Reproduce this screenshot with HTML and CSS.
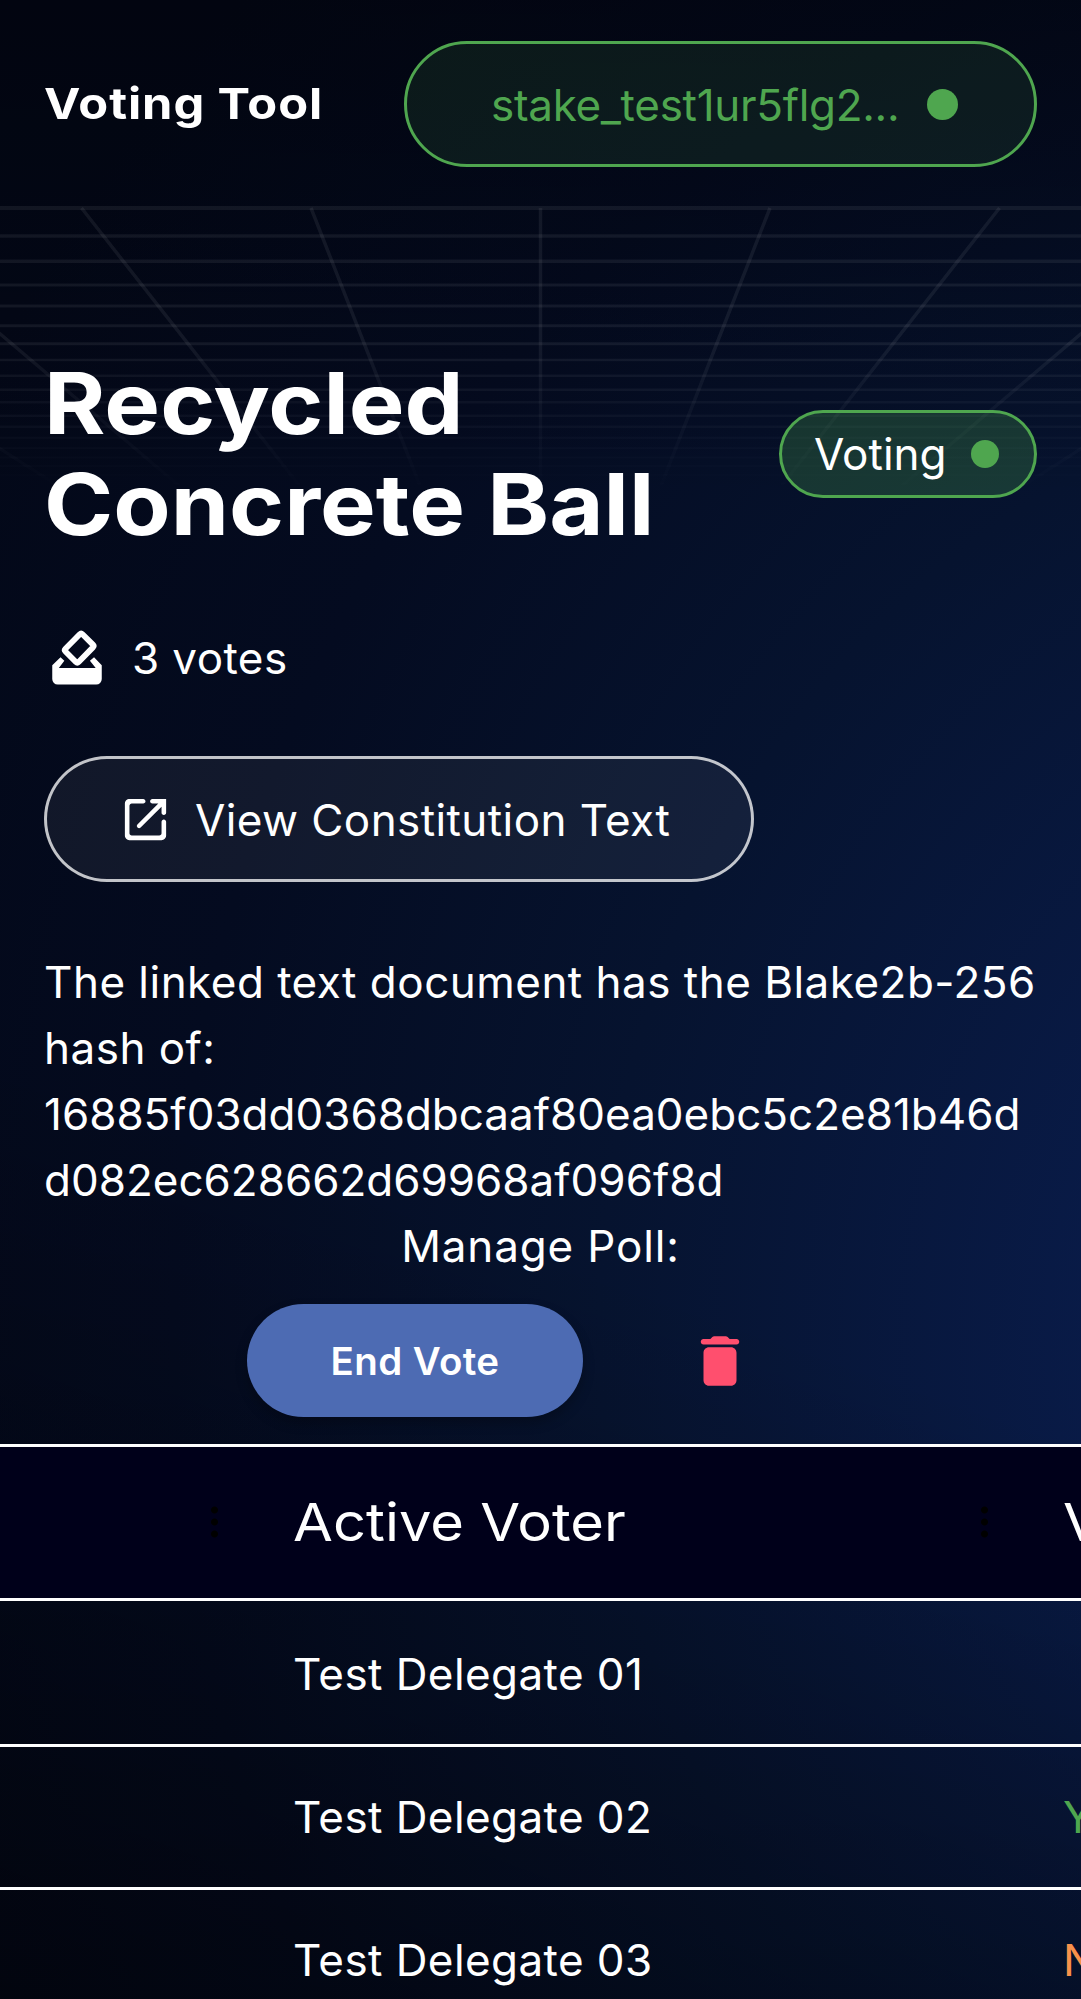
FILE: index.html
```
<!DOCTYPE html>
<html lang="en">
<head>
<meta charset="utf-8">
<title>Voting Tool</title>
<link rel="stylesheet" href="styles.css">
</head>
<body>
<svg class="grid" viewBox="0 0 1081 300" aria-hidden="true">
  <g class="grid-rows">
    <path stroke-width="4" d="M0 2H1081"/>
    <path stroke-width="3.4" d="M0 30H1081M0 55.3H1081"/>
    <path stroke-width="3" d="M0 79H1081M0 100H1081M0 119.7H1081M0 137.7H1081"/>
    <path stroke-width="2.5" d="M0 154H1081M0 169.7H1081M0 183.7H1081M0 196.3H1081M0 209.7H1081M0 220.7H1081"/>
    <path stroke-width="2" d="M0 231.7H1081M0 242.3H1081M0 251.5H1081M0 260H1081M0 269H1081M0 277.6H1081M0 286H1081"/>
  </g>
  <path class="grid-cols" d="M540.5 2V290M311 2L424 290M81.5 2L307.5 290M-148 2L191 290M-377.5 2L74 290M770 2L657 290M999.5 2L773.5 290M1229 2L890 290M1458.5 2L1007 290"/>
</svg>
<header class="topbar">
  <div class="brand">Voting Tool</div>
  <button class="wallet"><span class="wallet-id">stake_test1ur5flg2...</span><i class="dot dot-lg"></i></button>
</header>
<main class="poll">
  <section class="heading">
    <h1>Recycled<br>Concrete Ball</h1>
    <div class="status"><span>Voting</span><i class="dot"></i></div>
  </section>
  <div class="votes">
    <svg class="icon" viewBox="0 0 24 24"><path d="M6 12.1l1.4 1.3L5.4 16h13.4l-2.1-2.6 1.5-1.3L21 15v5a2 2 0 0 1-2 2H5a2 2 0 0 1-2-2v-5z"/><path fill="none" stroke="currentColor" stroke-width="2.1" stroke-linejoin="round" d="M13 3.7q.5-.5 1 0l3.8 3.8q.5.5 0 1l-5.2 5.3q-.5.5-1 0l-3.8-3.8q-.5-.5 0-1z"/></svg>
    <span>3 votes</span>
  </div>
  <a class="doc-link">
    <svg class="link-icon" viewBox="0 0 24 24"><path d="M18 19H6c-.55 0-1-.45-1-1V6c0-.55.45-1 1-1h5c.55 0 1-.45 1-1s-.45-1-1-1H5c-1.11 0-2 .9-2 2v14c0 1.1.9 2 2 2h14c1.1 0 2-.9 2-2v-6c0-.55-.45-1-1-1s-1 .45-1 1v5c0 .55-.45 1-1 1zM14 4c0 .55.45 1 1 1h2.59l-9.13 9.13a1 1 0 0 0 1.41 1.41L19 6.41V9c0 .55.45 1 1 1s1-.45 1-1V3h-6c-.55 0-1 .45-1 1z"/></svg>
    <span>View Constitution Text</span>
  </a>
  <p class="hash">The linked text document has the Blake2b-256 hash of: <span class="digest">16885f03dd0368dbcaaf80ea0ebc5c2e81b46dd082ec628662d69968af096f8d</span></p>
  <p class="manage">Manage Poll:</p>
  <div class="actions">
    <button class="end">End Vote</button>
    <svg class="trash" viewBox="0 0 24 24"><path d="M6 19c0 1.1.9 2 2 2h8c1.1 0 2-.9 2-2V9c0-1.1-.9-2-2-2H8c-1.1 0-2 .9-2 2v10zM18 4h-2.5l-.71-.71c-.18-.18-.44-.29-.7-.29H9.91c-.26 0-.52.11-.7.29L8.5 4H6c-.55 0-1 .45-1 1s.45 1 1 1h12c.55 0 1-.45 1-1s-.45-1-1-1z"/></svg>
  </div>
</main>
<section class="voters">
  <div class="row head"><div class="cell sep"></div><div class="cell sep"><span>Active Voter</span></div><div class="cell"><span>Vote</span></div></div>
  <div class="row"><div class="cell"></div><div class="cell">Test Delegate 01</div><div class="cell"></div></div>
  <div class="row"><div class="cell"></div><div class="cell">Test Delegate 02</div><div class="cell yes">Yes</div></div>
  <div class="row"><div class="cell"></div><div class="cell">Test Delegate 03</div><div class="cell no">No</div></div>
</section>
</body>
</html>
```
FILE: styles.css
```
* { box-sizing: border-box; }
html { height: 100%; overflow: hidden; }
body {
  position: relative;
  margin: 0;
  height: 1999px;
  overflow: hidden;
  color: #fff;
  font: 400 44px/66px Inter, "Liberation Sans", sans-serif;
  letter-spacing: 0.41px;
  background:
    linear-gradient(200deg, transparent 60%, rgba(0, 0, 0, 0.45) 100%),
    linear-gradient(rgba(0, 0, 4, 0.4), transparent 500px),
    radial-gradient(1700px 1900px at 1450px 1330px, #0a1f54 0%, #091b48 20%, #06132f 50%, #040b20 75%, #030818 100%);
}
button { font: inherit; letter-spacing: inherit; color: inherit; }
svg { display: block; flex: none; fill: currentColor; }

/* Perspective grid behind the heading */
.grid {
  position: absolute;
  top: 206px;
  left: 0;
  width: 1081px;
  height: 300px;
  fill: none;
  stroke: rgba(255, 255, 255, 0.065);
  -webkit-mask-image: linear-gradient(#000 45%, transparent 97%);
  mask-image: linear-gradient(#000 45%, transparent 97%);
}
.grid-cols { stroke-width: 3.5px; }

.topbar {
  position: relative;
  display: flex;
  align-items: center;
  justify-content: space-between;
  height: 208px;
  padding: 0 44px;
}
.brand {
  padding-bottom: 3px;
  font-weight: 700;
  font-size: 43px;
  letter-spacing: 0.8px;
  transform: scaleX(1.135);
  transform-origin: left;
}
.wallet {
  display: flex;
  align-items: center;
  justify-content: space-between;
  width: 633px;
  height: 126px;
  padding: 0 76px 0 84px;
  border: 3px solid #4fa64f;
  border-radius: 63px;
  background: rgba(79, 166, 79, 0.12);
  color: #4fa64f;
}
.wallet-id { padding-top: 2px; letter-spacing: -0.3px; }
.dot { width: 28px; height: 28px; border-radius: 50%; background: #4fa64f; }
.dot-lg { width: 31px; height: 31px; }

.poll { position: relative; height: 1236px; padding: 145px 44px 0; }
.heading { display: flex; align-items: center; justify-content: space-between; height: 202px; }
h1 {
  margin: 0;
  font-size: 85px;
  line-height: 101px;
  font-weight: 700;
  letter-spacing: 0;
  transform: scaleX(1.102);
  transform-origin: left;
}
.status {
  display: flex;
  align-items: center;
  justify-content: space-between;
  width: 258px;
  height: 88px;
  padding: 0 35px 0 32px;
  border: 3px solid #4fa64f;
  border-radius: 44px;
  background: rgba(79, 166, 79, 0.26);
  letter-spacing: 0;
}
.votes { display: flex; align-items: center; gap: 22px; height: 66px; margin: 70px 0 0; }
.icon { width: 66px; height: 66px; margin-top: -2px; }
.doc-link {
  display: flex;
  align-items: center;
  gap: 22px;
  width: 710px;
  height: 126px;
  margin-top: 65px;
  padding-left: 71px;
  border: 3px solid rgba(255, 255, 255, 0.75);
  border-radius: 63px;
  background: rgba(255, 255, 255, 0.06);
}
.doc-link span { padding-top: 2px; }
.link-icon { width: 55px; height: 55px; }
.hash { margin: 67px 0 0; letter-spacing: 0.48px; }
.digest { display: block; word-break: break-all; letter-spacing: 0; }
.manage { margin: 0; text-align: center; letter-spacing: 0.85px; }
.actions { display: flex; align-items: center; gap: 104px; margin: 25px 0 0 203px; height: 113px; }
.end {
  width: 336px;
  height: 113px;
  border: 0;
  border-radius: 57px;
  background: #4d6bb3;
  font-size: 38.5px;
  font-weight: 600;
  box-shadow: 0 6px 12px rgba(0, 0, 0, 0.25);
}
.trash { width: 66px; height: 66px; color: #ff4f6e; }

.voters { position: relative; border-top: 3px solid #fff; }
.row { display: grid; grid-template-columns: 267px 770px 44px; height: 143px; border-bottom: 3px solid #fff; }
.row:nth-child(2) { height: 146px; }
.cell { position: relative; display: flex; align-items: center; padding: 0 26px; }
.row:nth-child(2) .cell { padding-top: 2px; }
.head { height: 154px; background: #00001a; font-size: 52.5px; letter-spacing: 0; }
.head span { padding-bottom: 2px; transform: scaleX(1.102); transform-origin: left; }
.sep::after {
  content: "";
  position: absolute;
  right: 49px;
  top: 57px;
  width: 7px;
  height: 36px;
  background: radial-gradient(circle, #000 3px, transparent 4px) 0 0 / 7px 12px;
}
.yes { color: #4fa64f; }
.no { color: #f8914b; }
```
